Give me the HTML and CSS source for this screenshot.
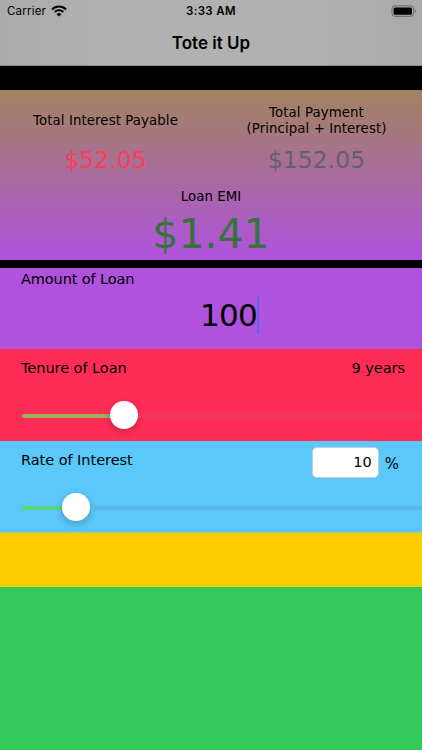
FILE: index.html
```
<!DOCTYPE html>
<html lang="en">
<head>
    <meta charset="UTF-8">
    <meta name="viewport" content="width=device-width, initial-scale=1.0">
    <title>Tote it Up</title>
    <link rel="stylesheet" href="styles.css">
</head>
<body>
    <header class="top">
        <div class="status">
            <div class="carrier">
                <span>Carrier</span>
                <svg class="wifi" width="16" height="12" viewBox="0 0 16 12">
                    <path d="M1 4.4a10 10 0 0 1 14 0M3.6 7.1a6.3 6.3 0 0 1 8.8 0" fill="none" stroke="#000" stroke-width="2.1"/>
                    <path d="M8 11.6 5.6 9.2a3.4 3.4 0 0 1 4.8 0z"/>
                </svg>
            </div>
            <span class="time">3:33 AM</span>
            <svg class="battery" width="26" height="12" viewBox="0 0 26 12">
                <rect x="1" y="0.9" width="21.6" height="10.4" rx="2.8" fill="none" stroke="#666" stroke-width="1"/>
                <rect x="2.6" y="2.5" width="18.4" height="7.2" rx="1.5"/>
                <path d="M24 4.3v3.4c1.4-.6 1.4-2.8 0-3.4z" fill="#666"/>
            </svg>
        </div>
        <h1>Tote it Up</h1>
    </header>

    <section class="summary">
        <div class="totals">
            <div class="total">
                <p class="caption">Total Interest Payable</p>
                <p class="value interest">$52.05</p>
            </div>
            <div class="total">
                <p class="caption">Total Payment<br>(Principal + Interest)</p>
                <p class="value payment">$152.05</p>
            </div>
        </div>
        <p class="caption emi-caption">Loan EMI</p>
        <p class="emi">$1.41</p>
    </section>

    <section class="row amount">
        <span class="label">Amount of Loan</span>
        <div class="amount-input"><span>100</span><i class="caret"></i></div>
    </section>

    <section class="row tenure">
        <div class="line">
            <span class="label">Tenure of Loan</span>
            <span class="years">9 years</span>
        </div>
        <div class="slider">
            <div class="fill"></div>
            <div class="knob"></div>
            <div class="track"></div>
        </div>
    </section>

    <section class="row rate">
        <div class="line">
            <span class="label">Rate of Interest</span>
            <div class="percent">
                <span class="box">10</span>
                <span class="unit">%</span>
            </div>
        </div>
        <div class="slider">
            <div class="fill"></div>
            <div class="knob"></div>
            <div class="track"></div>
        </div>
    </section>

    <section class="spare"></section>
</body>
</html>
```
FILE: styles.css
```
* {
    box-sizing: border-box;
}

body {
    margin: 0;
    height: 750px;
    display: flex;
    flex-direction: column;
    overflow: hidden;
    background: #34c759;
    color: #000;
    font-family: Verdana, "DejaVu Sans", sans-serif;
}
p, h1 {
    margin: 0;
}

/* status bar and title */
.top {
    height: 66px;
    flex: none;
    background: linear-gradient(90deg, #aaa, #b1b1b1 25%, #b1b1b1 75%, #a9a9a9);
    border-bottom: 1px solid #8e8e8e;
    font-family: Inter, sans-serif;
}
.status {
    height: 22px;
    padding: 0 5px 0 7px;
    display: grid;
    grid-template-columns: 1fr auto 1fr;
    align-items: center;
    font-size: 11.5px;
    line-height: 22px;
}
.carrier {
    display: flex;
    align-items: center;
    gap: 5px;
    letter-spacing: 0.2px;
}
.time {
    margin-right: 2px;
    font-weight: 600;
    letter-spacing: 0.35px;
}
.battery {
    justify-self: end;
}
h1 {
    text-align: center;
    font-size: 17px;
    font-weight: 600;
    line-height: 42px;
}

/* results */
.summary {
    height: 202px;
    flex: none;
    border-top: 24px solid #000;
    border-bottom: 8px solid #000;
    background: linear-gradient(#a2845e, #af52de);
    text-align: center;
}
.totals {
    display: grid;
    grid-template-columns: 1fr 1fr;
    height: 96px;
    padding-top: 15px;
}
.caption {
    font-size: 13.3px;
    line-height: 16px;
    letter-spacing: 0.1px;
}
.total .caption {
    height: 32px;
    display: flex;
    align-items: center;
    justify-content: center;
}
.value {
    margin-top: 8px;
    font-size: 23.5px;
    line-height: 30px;
}
.interest {
    color: #ff3b5c;
}
.payment {
    color: #636068;
}
.emi-caption {
    margin-top: 3px;
}
.emi {
    margin-top: 4px;
    font-size: 41px;
    line-height: 50px;
    color: #34733c;
}

/* input rows */
.row {
    flex: none;
    padding: 0 0 0 21px;
}
.label, .years {
    font-size: 14.5px;
    line-height: 20px;
    letter-spacing: -0.04px;
}
.line {
    display: flex;
    justify-content: space-between;
    padding-right: 17px;
}
.amount {
    height: 81px;
    padding-top: 1px;
    background: #af52de;
    display: flex;
    flex-direction: column;
}
.amount .label {
    letter-spacing: -0.12px;
}
.amount-input {
    display: flex;
    align-items: center;
    align-self: flex-start;
    margin: 7px 0 0 179px;
    font-size: 31px;
    line-height: 38px;
    letter-spacing: -0.7px;
}
.caret {
    width: 2px;
    height: 38px;
    background: #5b63e8;
}
.tenure {
    height: 92px;
    padding-top: 9px;
    background: #ff2d55;
}
.rate {
    height: 92px;
    padding-top: 6px;
    background: #5ac8fa;
    border-bottom: 1px solid #a5ca85;
}
.rate .label {
    margin-top: 3px;
}
.percent {
    display: flex;
    gap: 6px;
    padding-right: 6px;
}
.box {
    width: 67px;
    height: 31px;
    padding-right: 6px;
    border: 1px solid #c5cdd1;
    border-radius: 5px;
    background: #fff;
    text-align: right;
    font-size: 14.5px;
    line-height: 29px;
}
.unit {
    font-size: 15px;
    line-height: 34px;
}

/* sliders */
.slider {
    display: flex;
    align-items: center;
    height: 28px;
}
.tenure .slider {
    margin-top: 23px;
}
.rate .slider {
    margin-top: 12px;
}
.fill {
    height: 4px;
    margin-left: 1px;
    border-radius: 2px 0 0 2px;
}
.tenure .fill {
    width: 88px;
    background: #98b25a;
}
.rate .fill {
    width: 40px;
    background: #5bd978;
}
.knob {
    width: 28px;
    height: 28px;
    border-radius: 50%;
    background: #fff;
    box-shadow: 0 3px 8px rgba(0, 0, 0, 0.22);
}
.track {
    flex: 1;
    height: 4px;
}
.fill, .track {
    margin-top: 2px;
}
.tenure .track {
    background: #ea395f;
}
.rate .track {
    background: #5bb8e6;
}

.spare {
    height: 54px;
    flex: none;
    background: #ffcc00;
}
```
